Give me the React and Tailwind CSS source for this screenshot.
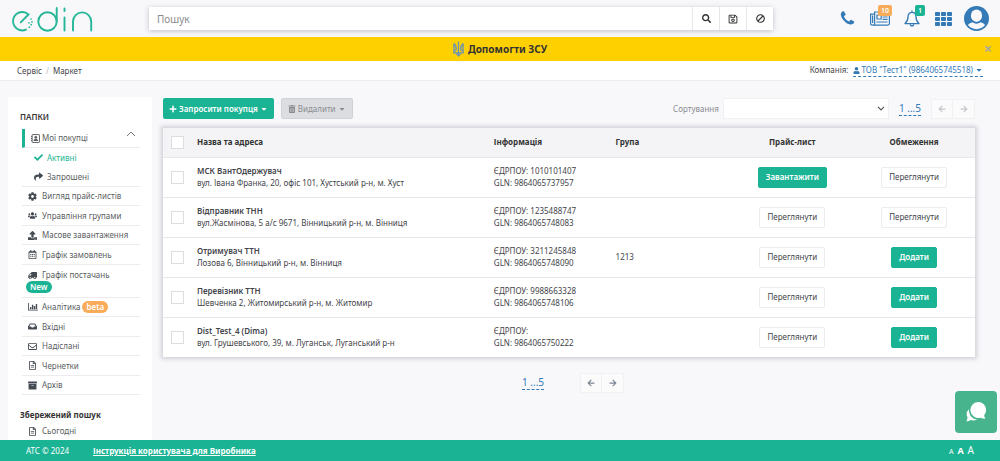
import React from "react";
import {
  FaSearch, FaRegSave, FaBan, FaUser, FaCaretDown, FaPlus, FaTrashAlt, FaCheck, FaShare, FaCog, FaUsers,
  FaUpload, FaRegCalendarAlt, FaTruck, FaInbox, FaRegEnvelope, FaRegFileAlt, FaArchive, FaArrowLeft, FaArrowRight,
} from "react-icons/fa";

function Logo() {
  return (
    <svg viewBox="11 4 82 28" className="h-7 w-[82px]" fill="none" stroke="#25b698" strokeWidth="1.9" strokeLinecap="round" aria-label="edin">
      <path d="M20.700 21.300 28.500 13.500A9.200 9.200 0 1 0 26 28.600" />
      <path d="M31 18h.01M32 20.900h.01M31.200 23.700h.01M29.300 26.200h.01M29 21.800h.01" strokeWidth="1.700" />
      <circle cx="47.500" cy="20.500" r="9.200" />
      <path d="M56.700 7v13.500M64.500 7.500v2.500M64.500 16.500v13M73 29.500V20.500a9.100 9.100 0 0 1 18.200 0v9" />
    </svg>
  );
}

function PhoneIcon() {
  return (
    <svg viewBox="0 0 1792 1792" className="size-[17px]" fill="currentColor">
      <path d="M1600 1240q0 27-10 70.5t-21 68.5q-21 50-122 106-94 51-186 51-27 0-53-3.5t-57.5-12.5-47-14.5-55.5-20.5-49-18q-98-35-175-83-127-79-264-216t-216-264q-48-77-83-175-3-9-18-49t-20.5-55.5-14.5-47-12.5-57.5-3.5-53q0-92 51-186 56-101 106-122 25-11 68.5-21t70.5-10q14 0 21 3 18 6 53 76 11 19 30 54t35 63.5 31 53.5q3 4 17.5 25t21.5 35.5 7 28.5q0 20-28.5 50t-62 55-62 53-28.5 46q0 9 5 22.5t8.500 20.500 14 24 11.500 19q76 137 174 235t235 174q2 1 19 11.500t24 14 20.500 8.500 22.500 5q18 0 46-28.500t53-62 55-62 50-28.500q14 0 28.500 7t35.500 21.500 25 17.500q25 15 53.500 31t63.500 35 54 30q70 35 76 53 3 7 3 21z" />
    </svg>
  );
}

function NewsIcon() {
  return (
    <svg viewBox="0 0 20 15" className="h-[15px] w-5" fill="none" stroke="currentColor" strokeWidth="1.2">
      <path d="M4.6 11.8V1h14.8v11.4a1.8 1.8 0 0 1-1.8 1.8H2.5A1.9 1.9 0 0 1 .6 12.3V3.2h4M4.6 11.5a1.9 1.9 0 0 1-1.9 2.7M2.6 4.5v7.4" />
      <path d="M7 4h4.2v4H7zM12.6 3.6h5M12.6 6h5M12.6 8.4h5M6.4 11h11.2" />
    </svg>
  );
}

function BellIcon() {
  return (
    <svg viewBox="0 0 16 17" className="h-[17px] w-4" fill="none" stroke="currentColor" strokeWidth="1.3" strokeLinejoin="round">
      <path d="M8 .6v1.6M1 13.6c2.2-1.8 3-4 3-6.8C4 4 5.8 2.3 8 2.3S12 4 12 6.8c0 2.8.8 5 3 6.8z" />
      <path d="M6.2 14.2a1.8 1.8 0 0 0 3.6 0" />
    </svg>
  );
}

function GridIcon() {
  return (
    <svg viewBox="0 0 17 14" className="h-3.5 w-[17px]" fill="currentColor">
      {[0, 5, 10].map((y) => [0, 6, 12].map((x) => <rect key={`${x}-${y}`} x={x} y={y} width="5" height="4" rx=".8" />))}
    </svg>
  );
}

function Avatar() {
  return (
    <svg viewBox="0 0 24 24" className="size-[25px]">
      <circle cx="12" cy="12" r="12" fill="#337ab7" />
      <ellipse cx="12" cy="9.3" rx="5.4" ry="6" fill="#f8f8fb" />
      <path d="M3.8 18.2c1.1-1.2 2.5-2 4.4-2.5 2.2 1.8 5.4 1.8 7.6 0 1.9.5 3.3 1.3 4.4 2.5A10.3 10.3 0 0 1 3.8 18.2z" fill="#f8f8fb" />
    </svg>
  );
}

function Trident() {
  return (
    <svg viewBox="0 0 11 16" className="h-4 w-[11px]" fill="none" stroke="#6a93b4" strokeWidth="1.3">
      <path d="M5.5 .5v14.8M.9 2.5v9.3h9.2V2.5M.9 2.5C3 4 3.4 6 3.2 8.5c-.1 1.3-1 1.5-1.8 1.700M10.100 2.500C8 4 7.600 6 7.800 8.500c.1 1.300 1 1.500 1.800 1.700M3 11.500c.3 1.700 1.300 2.300 2.500 3.500 1.200-1.200 2.200-1.800 2.500-3.500" />
    </svg>
  );
}

function ContactIcon() {
  return (
    <svg viewBox="0 0 16 16" className="size-[9px]" fill="none" stroke="currentColor" strokeWidth="1.7">
      <rect x="2" y="1" width="13" height="14" rx="1" />
      <path d="M0 4.5h2M0 8h2M0 11.5h2" />
      <circle cx="8.5" cy="6" r="2.4" fill="currentColor" stroke="none" />
      <path d="M4.5 12.5c0-3 1.5-3.8 4-3.8s4 .8 4 3.800z" fill="currentColor" stroke="none" />
    </svg>
  );
}

function ChartIcon() {
  return (
    <svg viewBox="0 0 18 14" className="h-2 w-2.5" fill="currentColor">
      <path d="M0 0h1.5v12H18v1.5H0zM3.5 7H6v4H3.5zM7 3h2.5v8H7zM10.5 5H13v6h-2.5zM14 1.5h2.5V11H14z" />
    </svg>
  );
}

function ChatIcon() {
  return (
    <svg viewBox="0 0 20 20" className="size-5" fill="#fff">
      <path d="M12 0a8 8 0 1 0 2.5 15.7c1.6.9 3.2 1.2 4.9 1.1-.8-1-1.2-2.2-1.2-3.7A8 8 0 0 0 12 0z" />
      <path d="M3 7.2a6.8 6.8 0 0 0-1.5 8.1c0 1.5-.3 2.8-1 4 1.7 0 3-.3 4.3-1.2 2.2.7 4.4.5 6.3-.6-4.6-.3-8.5-4.2-8.1-10.3z" />
    </svg>
  );
}

const folders = [
  { icon: <FaCog />, label: "Вигляд прайс-листів" },
  { icon: <FaUsers />, label: "Управління групами" },
  { icon: <FaUpload />, label: "Масове завантаження" },
  { icon: <FaRegCalendarAlt />, label: "Графік замовлень" },
];
const mailboxes = [
  { icon: <ChartIcon />, label: "Аналітика", badge: "beta" },
  { icon: <FaInbox />, label: "Вхідні" },
  { icon: <FaRegEnvelope />, label: "Надіслані" },
  { icon: <FaRegFileAlt />, label: "Чернетки" },
  { icon: <FaArchive />, label: "Архів" },
];

const itemIcon = "flex w-[14px] text-[9px] text-[#454b52]";

function FolderItem({ icon, label, badge }) {
  return (
    <li className="flex border-b border-[#ececef] pl-1.5 odd:h-[19px] even:h-5">
      <a href="#" className="flex items-center whitespace-nowrap">
        <span className={itemIcon}>{icon}</span>
        {label}
        {badge && <span className="ml-0.5 rounded-full bg-[#f8ac59] px-1 font-semibold leading-3 text-white">{badge}</span>}
      </a>
    </li>
  );
}

const rows = [
  { name: "МСК ВантОдержувач", addr: "вул. Івана Франка, 20, офіс 101, Хустський р-н, м. Хуст", code: "1010101407", gln: "9864065737957", price: "Завантажити", limit: "Переглянути" },
  { name: "Відправник ТНН", addr: "вул.Жасмінова, 5 а/с 9671, Вінницький р-н, м. Вінниця", code: "1235488747", gln: "9864065748083", price: "Переглянути", limit: "Переглянути" },
  { name: "Отримувач ТТН", addr: "Лозова 6, Вінницький р-н, м. Вінниця", code: "3211245848", gln: "9864065748090", group: "1213", price: "Переглянути", limit: "Додати" },
  { name: "Перевізник ТТН", addr: "Шевченка 2, Житомирський р-н, м. Житомир", code: "9988663328", gln: "9864065748106", price: "Переглянути", limit: "Додати" },
  { name: "Dist_Test_4 (Dima)", addr: "вул. Грушевського, 39, м. Луганськ, Луганський р-н", code: "", gln: "9864065750222", price: "Переглянути", limit: "Додати" },
];

function ActionButton({ label }) {
  return label === "Переглянути" ? (
    <button className="h-[21px] rounded-xs border border-[#ececef] bg-white px-[7px]">{label}</button>
  ) : (
    <button className="h-[21px] rounded-xs border border-[#1ab394] bg-[#1ab394] px-[7px] font-semibold text-white">{label}</button>
  );
}

function Checkbox({ label }) {
  return <input type="checkbox" aria-label={label} className="block size-[13px] appearance-none border border-[#dcdde0] bg-white checked:bg-[#1ab394]" />;
}

function Pager({ muted }) {
  return (
    <div className={muted ? "flex items-center gap-2.5" : "flex items-center gap-9"}>
      <a href="#" className="border-b border-dashed border-[#337ab7] text-[10px] leading-[13px] text-[#337ab7]">1 ...5</a>
      <div className={muted ? "flex text-[#c3c5c9]" : "flex text-[#7b8794]"}>
        <button aria-label="Попередня" className="flex h-5 w-[22px] items-center justify-center border border-[#f1f1f4] bg-white/40"><FaArrowLeft /></button>
        <button aria-label="Наступна" className="flex h-5 w-[22px] items-center justify-center border border-l-0 border-[#f1f1f4] bg-white/40"><FaArrowRight /></button>
      </div>
    </div>
  );
}

export default function App() {
  const searchButton = "flex w-[27px] items-center justify-center border-l border-[#e7e7ea] text-[9px] text-[#333]";
  return (
    <div className="flex h-screen flex-col overflow-hidden bg-[#f8f8fb] font-['Noto_Sans','Open_Sans',sans-serif] text-[8px] leading-3 text-[#3f4449]">
      <header className="flex h-[37px] shrink-0 items-center pl-[11px] pr-[11px]">
        <a href="#"><Logo /></a>
        <div className="ml-14 flex h-[23px] min-w-0 flex-1 bg-white shadow-[0_1px_5px_rgba(60,60,90,0.3)]">
          <input aria-label="Пошук" placeholder="Пошук" className="min-w-0 flex-1 px-2 text-[10px] outline-none placeholder:text-[#8b8b8b]" />
          <button aria-label="Знайти" className={searchButton}><FaSearch /></button>
          <button aria-label="Зберегти" className={searchButton}><FaRegSave className="size-2.5" /></button>
          <button aria-label="Очистити" className={searchButton}><FaBan className="-scale-x-100" /></button>
        </div>
        <div className="ml-[66px] flex items-center text-[#337ab7]">
          <a href="#" aria-label="Телефон"><PhoneIcon /></a>
          <a href="#" aria-label="Новини" className="relative ml-[14px]">
            <NewsIcon />
            <span className="absolute -top-1.5 left-2 rounded-xs bg-[#f8ac59] px-[3px] text-[7px] font-semibold leading-[11px] text-white">10</span>
          </a>
          <a href="#" aria-label="Сповіщення" className="relative ml-[14px]">
            <BellIcon />
            <span className="absolute -top-[5px] left-[11px] rounded-xs bg-[#1ab394] px-[3px] text-[7px] font-semibold leading-[11px] text-white">1</span>
          </a>
          <a href="#" aria-label="Сервіси" className="ml-[15px]"><GridIcon /></a>
          <a href="#" aria-label="Профіль" className="ml-3"><Avatar /></a>
        </div>
      </header>

      <div className="flex h-6 shrink-0 items-center bg-[#ffd000] pr-2">
        <a href="#" className="flex flex-1 items-center justify-center gap-1 pl-4 text-[10px] font-bold text-[#333]">
          <Trident />Допомогти ЗСУ
        </a>
        <button aria-label="Закрити" className="text-[14px] font-bold text-[#a9a99b]">×</button>
      </div>

      <nav className="flex h-5 shrink-0 items-center justify-between border-b border-[#ececf0] bg-white pl-[17px] pr-[17px]">
        <div className="flex gap-1">
          <a href="#">Сервіс</a>
          <span className="text-[#c0c0c0]">/</span>
          <a href="#">Маркет</a>
        </div>
        <div className="flex gap-1">
          Компанія:
          <button className="flex items-center gap-0.5 border-b border-dashed border-[#337ab7] text-[#337ab7]">
            <FaUser className="size-[7px]" />ТОВ "Тест1" (9864065745518)<FaCaretDown />
          </button>
        </div>
      </nav>

      <main className="flex min-h-0 flex-1 overflow-hidden pl-2 pr-[25px] pt-4">
        <aside className="mr-[11px] w-[144px] shrink-0 bg-white pl-3 pr-3 pt-3.5 text-[#5a5e62]">
          <h2 className="pb-1.5 font-semibold text-[#333]">ПАПКИ</h2>
          <div className="ml-0.5">
            <a href="#" className="flex h-[19px] items-center gap-0.5 border-b border-l-3 border-b-[#ececef] border-l-[#1ab394] pl-1.5">
              <ContactIcon />Мої покупці
              <svg viewBox="0 0 10 6" className="mb-2 ml-auto mr-1 h-1.5 w-2.5" fill="none" stroke="#777"><path d="M1 5l4-4 4 4" /></svg>
            </a>
            <ul className="border-b border-[#ececef]">
              <li className="flex h-[19px] items-center pl-3 text-[#1ab394]"><FaCheck className="mr-1 size-[9px]" /><a href="#">Активні</a></li>
              <li className="flex h-[19px] items-center pl-3"><FaShare className="mr-1 size-[9px] text-[#454b52]" /><a href="#">Запрошені</a></li>
            </ul>
            <ul>{folders.map((f) => <FolderItem key={f.label} {...f} />)}</ul>
            <a href="#" className="block border-b border-[#ececef] py-1">
              <span className="flex items-center whitespace-nowrap pl-1.5"><span className={itemIcon}><FaTruck className="-scale-x-100" /></span>Графік постачань</span>
              <span className="ml-1 block w-fit rounded-full bg-[#1ab394] px-1 font-semibold text-white">New</span>
            </a>
            <ul>{mailboxes.map((f) => <FolderItem key={f.label} {...f} />)}</ul>
          </div>
          <h2 className="pt-3.5 font-bold text-[#333]">Збережений пошук</h2>
          <a href="#" className="ml-0.5 flex items-center pl-1.5 pt-1"><span className={itemIcon}><FaRegFileAlt /></span>Сьогодні</a>
        </aside>

        <section className="min-w-0 flex-1">
          <div className="flex items-center pt-px">
            <button className="flex h-[21px] items-center gap-0.5 rounded-xs bg-[#1ab394] px-1.5 font-semibold text-white"><FaPlus className="size-2" />Запросити покупця<FaCaretDown /></button>
            <button className="ml-[7px] flex h-[21px] items-center gap-0.5 rounded-xs border border-[#d0d2d5] bg-[#dcdde0] px-1.5 text-[#8a8c90]"><FaTrashAlt className="size-2" />Видалити<FaCaretDown /></button>
            <label htmlFor="sort" className="ml-auto text-[#8a8c90]">Сортування</label>
            <div className="relative ml-1 mr-2.5 flex h-[21px] w-[166px]">
              <select id="sort" className="w-full appearance-none border border-[#f1f1f4] bg-white"><option></option></select>
              <svg viewBox="0 0 8 5" className="pointer-events-none absolute right-1 top-2 h-[5px] w-2" fill="none" stroke="#555" strokeWidth="1.2"><path d="M1 .8l3 3 3-3" /></svg>
            </div>
            <Pager muted />
          </div>

          <table className="mt-[9px] w-full table-fixed bg-white text-left shadow-[0_0_4px_2px_rgba(70,70,90,0.22)]">
            <thead className="bg-[#f4f4f6]">
              <tr className="h-[29px] border-b border-[#e7e8ec] text-[#333]">
                <th className="w-7 pl-2"><Checkbox label="Вибрати все" /></th>
                <th className="px-1.5">Назва та адреса</th>
                <th className="w-[15%] px-1.5">Інформація</th>
                <th className="w-[15%] px-1.5">Група</th>
                <th className="w-[15%] text-center">Прайс-лист</th>
                <th className="w-[15%] text-center">Обмеження</th>
              </tr>
            </thead>
            <tbody>
              {rows.map((r) => (
                <tr key={r.gln} className="h-10 border-b border-[#e7e8ec] last:border-b-0">
                  <td className="pl-2"><Checkbox label={r.name} /></td>
                  <td className="px-1.5"><div className="font-semibold">{r.name}</div><div>{r.addr}</div></td>
                  <td className="px-1.5"><div>ЄДРПОУ: {r.code}</div><div>GLN: {r.gln}</div></td>
                  <td className="px-1.5">{r.group}</td>
                  <td className="text-center"><ActionButton label={r.price} /></td>
                  <td className="text-center"><ActionButton label={r.limit} /></td>
                </tr>
              ))}
            </tbody>
          </table>

          <div className="mt-4 flex justify-center pl-2"><Pager /></div>
        </section>
      </main>

      <footer className="flex h-[21px] shrink-0 items-center bg-[#1ab394] pl-[26px] pr-[26px] text-white">
        <span>АТС © 2024</span>
        <a href="#" className="ml-6 font-bold underline">Інструкція користувача для Виробника</a>
        <div className="ml-auto flex items-baseline gap-1">
          <button className="text-[7px]">A</button>
          <button className="text-[9px] font-bold">A</button>
          <button className="text-[10px]">A</button>
        </div>
      </footer>

      <button aria-label="Чат" className="fixed bottom-7 right-[3px] flex size-[42px] items-center justify-center rounded-sm bg-[#48b48e]"><ChatIcon /></button>
    </div>
  );
}
